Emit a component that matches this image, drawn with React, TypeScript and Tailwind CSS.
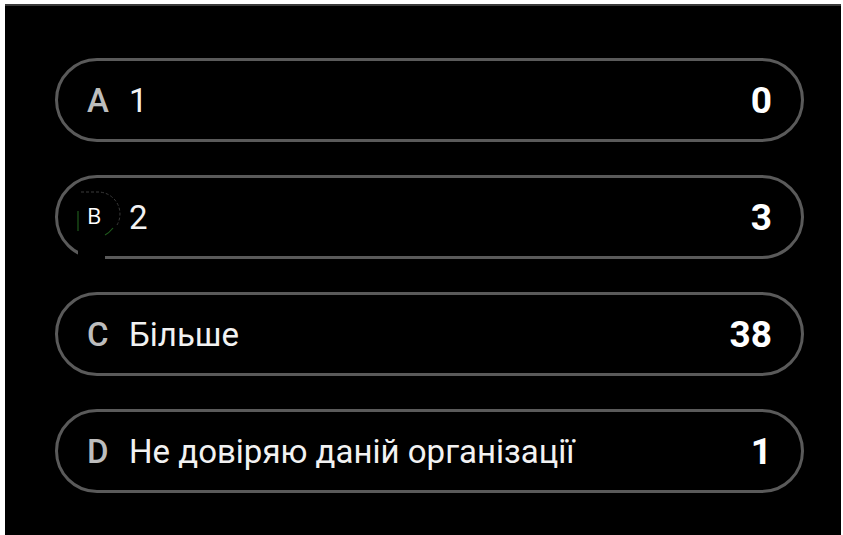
import React from "react";

type Option = { letter: string; label: string; count: number };

const options: Option[] = [
  { letter: "A", label: "1", count: 0 },
  { letter: "B", label: "2", count: 3 },
  { letter: "C", label: "Більше", count: 38 },
  { letter: "D", label: "Не довіряю даній організації", count: 1 },
];

function BadgeB() {
  // floating "B" keyhole marker overlapping the second option
  return (
    <div className="absolute left-[19px] top-[13px] h-[72px] w-[48px]">
      <svg width="48" height="72" viewBox="0 0 48 72" className="absolute left-0 top-0">
        <path
          d="M1 4 Q1 1 4 1 L22 1 A22 22 0 0 1 28 44 L28 71 L1 71 Z"
          fill="#000"
        />
        <path
          d="M4 1 L22 1 A22 22 0 0 1 40 34"
          fill="none"
          stroke="#3a3a3a"
          strokeWidth="1"
          strokeDasharray="3 2"
        />
        <path d="M1 20 L1 40" stroke="#1f5a1c" strokeWidth="1.2" />
        <path d="M36 37 Q32 42 28 44" fill="none" stroke="#1f5a1c" strokeWidth="1.2" />
      </svg>
      <span
        className="absolute left-[10px] top-[13px] text-[22px] leading-none text-white"
        style={{ fontFamily: '"Open Sans", sans-serif' }}
      >
        B
      </span>
    </div>
  );
}

export default function App() {
  return (
    <div className="h-[535px] w-[843px] bg-white pl-[5px] pr-[2px] pt-[4px]">
      <div
        className="flex h-full w-full flex-col gap-[33px] border-t-2 border-[#3a3a3a] bg-black pl-[50px] pr-[37px] pt-[52px]"
        style={{ fontFamily: "Roboto, sans-serif" }}
      >
        {options.map((o) => (
          <div
            key={o.letter}
            className="relative flex h-[84px] w-[749px] items-center rounded-full border-[3px] border-[#5a5a5a] pl-[29px] pr-[29px] pt-[2px]"
          >
            {o.letter === "B" ? (
              <>
                <BadgeB />
                <span className="w-[42px]" />
              </>
            ) : (
              <span className="w-[42px] text-[33px] font-medium text-[#bdbdbd]">{o.letter}</span>
            )}
            <span className="flex-1 text-[33px] text-[#f2f2f2]">{o.label}</span>
            <span className="text-[37px] font-bold text-white">{o.count}</span>
          </div>
        ))}
      </div>
    </div>
  );
}
